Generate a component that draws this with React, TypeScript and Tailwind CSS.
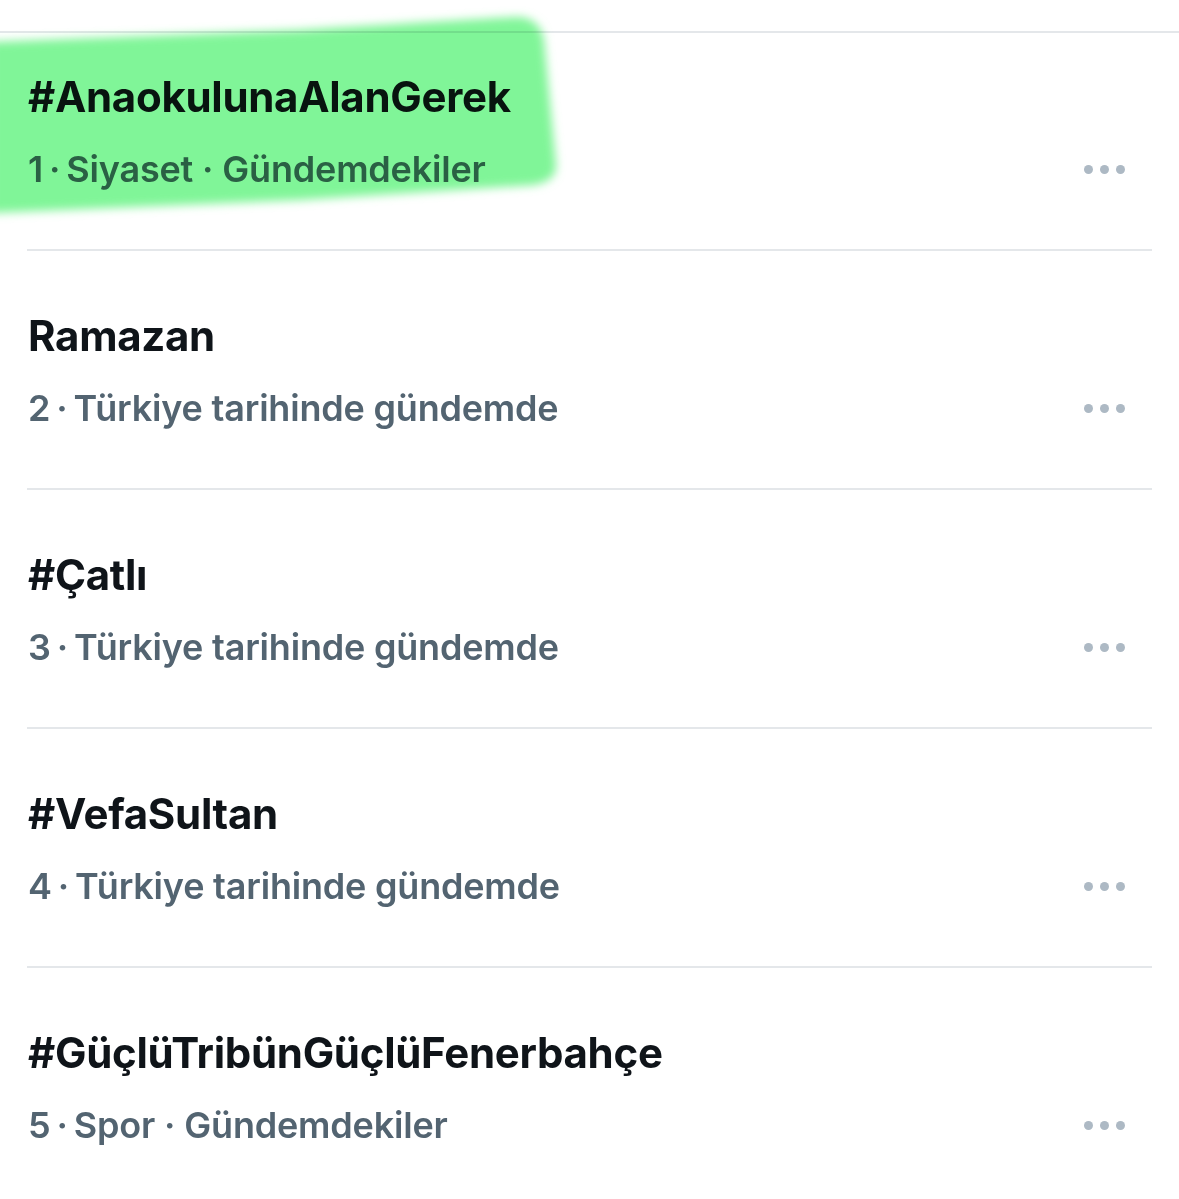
import React from "react";

type Trend = { title: string; meta: string[] };

const trends: Trend[] = [
  { title: "#AnaokulunaAlanGerek", meta: ["1", "Siyaset", "Gündemdekiler"] },
  { title: "Ramazan", meta: ["2", "Türkiye tarihinde gündemde"] },
  { title: "#Çatlı", meta: ["3", "Türkiye tarihinde gündemde"] },
  { title: "#VefaSultan", meta: ["4", "Türkiye tarihinde gündemde"] },
  { title: "#GüçlüTribünGüçlüFenerbahçe", meta: ["5", "Spor", "Gündemdekiler"] },
];

function MoreDots() {
  return (
    <div className="flex items-center gap-[7px] pr-[27px]">
      <span className="block h-[9px] w-[9px] rounded-full bg-[#adb9c4]" />
      <span className="block h-[9px] w-[9px] rounded-full bg-[#adb9c4]" />
      <span className="block h-[9px] w-[9px] rounded-full bg-[#adb9c4]" />
    </div>
  );
}

function TrendRow({ trend, first }: { trend: Trend; first: boolean }) {
  return (
    <div
      className={
        first
          ? "flex flex-col gap-[20px] pl-[28px] pr-[27px] pt-[36px] pb-[56px]"
          : "flex flex-col gap-[20px] pl-[28px] pr-[27px] pt-[57px] pb-[56px]"
      }
    >
      <div className="text-[42px] leading-[56px] font-bold tracking-[-0.3px] text-[#0f1419]">
        {trend.title}
      </div>
      <div className="flex items-center justify-between">
        <div className="whitespace-nowrap text-[36px] leading-[48px] font-semibold tracking-[-0.2px] text-[#536471]">
          {trend.meta.map((part, i) => (
            <React.Fragment key={part}>
              {i === 1 && <span className="inline-block px-[6px]">·</span>}
              {i > 1 && <span className="inline-block px-[9px]">·</span>}
              {part}
            </React.Fragment>
          ))}
        </div>
        <MoreDots />
      </div>
    </div>
  );
}

export default function App() {
  return (
    <div
      className="relative h-[1199px] w-[1179px] overflow-hidden bg-white"
      style={{ fontFamily: "Inter, 'Noto Sans', 'Liberation Sans', sans-serif" }}
    >
      <div className="h-[31px]" />
      <div className="h-[2px] bg-[#e4e7ea]" />
      <div className="flex flex-col">
        {trends.map((t, i) => (
          <React.Fragment key={t.title}>
            {i > 0 && <div className="mx-[27px] h-[2px] bg-[#e4e7ea]" />}
            <TrendRow trend={t} first={i === 0} />
          </React.Fragment>
        ))}
      </div>

      {/* highlighter stroke over the first trend */}
      <svg
        className="pointer-events-none absolute left-0 top-0 mix-blend-multiply"
        width="600"
        height="240"
        viewBox="0 0 600 240"
      >
        <defs>
          <filter id="soft" x="-10%" y="-10%" width="120%" height="120%">
            <feGaussianBlur stdDeviation="5" />
          </filter>
        </defs>
        <path
          d="M-10,42 L300,30 Q460,20 518,17 Q540,18 544,40 L556,165 Q557,181 534,185 L300,200 L-10,213 Z"
          fill="#80f598"
          filter="url(#soft)"
        />
      </svg>
    </div>
  );
}
